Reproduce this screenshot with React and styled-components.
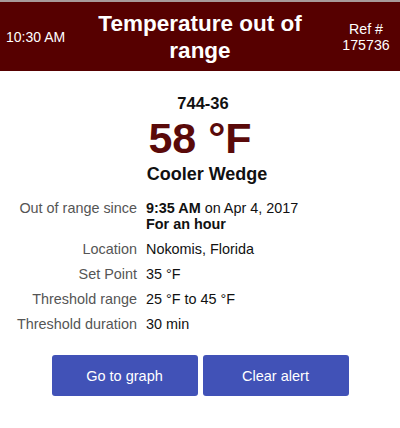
import React from "react";
import styled, { createGlobalStyle } from "styled-components";

const Global = createGlobalStyle`
  html, body { margin: 0; padding: 0; background: #fff; }
  body { font-family: "Liberation Sans", Arial, sans-serif; }
`;

const Page = styled.div`
  width: 400px;
  height: 428px;
  background: #fff;
  display: flex;
  flex-direction: column;
`;

const Header = styled.header`
  height: 69px;
  border-top: 2px solid #a89a9a;
  background: #560000;
  color: #fff;
  display: grid;
  grid-template-columns: 80px 1fr 80px;
  align-items: center;
`;

const Time = styled.div`
  font-size: 14px;
  padding-left: 6px;
  padding-top: 1px;
  white-space: nowrap;
`;

const Title = styled.h1`
  margin: 0;
  font-size: 22.5px;
  font-weight: bold;
  line-height: 27px;
  text-align: center;
`;

const Ref = styled.div`
  font-size: 14.2px;
  line-height: 16px;
  text-align: center;
  padding-left: 12px;
`;

const Body = styled.main`
  display: flex;
  flex-direction: column;
  align-items: center;
  padding-top: 22px;
`;

const Code = styled.div`
  font-size: 16.5px;
  font-weight: bold;
  color: #111;
  line-height: 20px;
  margin-left: 6px;
`;

const Temp = styled.div`
  font-size: 43px;
  font-weight: bold;
  color: #5a0a0a;
  line-height: 46px;
  margin-top: 2px;
`;

const Name = styled.div`
  font-size: 18px;
  font-weight: bold;
  color: #111;
  line-height: 22px;
  margin-top: 2px;
  margin-left: 14px;
`;

const Details = styled.dl`
  align-self: stretch;
  display: grid;
  grid-template-columns: 137px 1fr;
  column-gap: 9px;
  row-gap: 9px;
  margin: 15px 0 0 0;
  font-size: 14.4px;
  line-height: 16px;
`;

const Label = styled.dt`
  text-align: right;
  color: #555;
`;

const Value = styled.dd`
  margin: 0;
  color: #111;
`;

const Strong = styled.b`
  font-weight: bold;
`;

const Buttons = styled.div`
  display: flex;
  gap: 5px;
  margin-top: 23px;
`;

const Button = styled.button`
  width: 146px;
  height: 41px;
  border: none;
  border-radius: 3px;
  background: #4152b7;
  color: #fff;
  font-family: "Liberation Sans", Arial, sans-serif;
  font-size: 14.5px;
  cursor: pointer;
`;

export default function App() {
  return (
    <Page>
      <Global />
      <Header>
        <Time>10:30 AM</Time>
        <Title>Temperature out of range</Title>
        <Ref>
          Ref #
          <br />
          175736
        </Ref>
      </Header>
      <Body>
        <Code>744-36</Code>
        <Temp>58 °F</Temp>
        <Name>Cooler Wedge</Name>
        <Details>
          <Label>Out of range since</Label>
          <Value>
            <Strong>9:35 AM</Strong> on Apr 4, 2017
            <br />
            <Strong>For an hour</Strong>
          </Value>
          <Label>Location</Label>
          <Value>Nokomis, Florida</Value>
          <Label>Set Point</Label>
          <Value>35 °F</Value>
          <Label>Threshold range</Label>
          <Value>25 °F to 45 °F</Value>
          <Label>Threshold duration</Label>
          <Value>30 min</Value>
        </Details>
        <Buttons>
          <Button>Go to graph</Button>
          <Button>Clear alert</Button>
        </Buttons>
      </Body>
    </Page>
  );
}
